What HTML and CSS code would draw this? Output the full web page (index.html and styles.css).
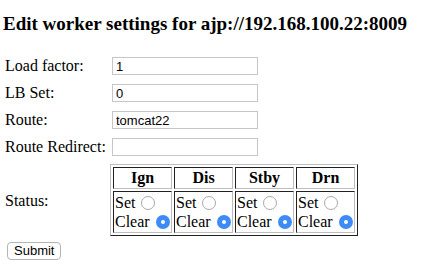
FILE: index.html
```html
<!DOCTYPE html>
<html lang="en">
<head>
    <meta charset="UTF-8">
    <title>Edit worker settings</title>
    <link rel="stylesheet" href="styles.css">
</head>
<body>
    <h3 class="title">Edit worker settings for ajp://192.168.100.22:8009</h3>
    <form class="settings">
        <div class="fields">
            <label class="label">Load factor:</label>
            <input class="field" type="text" value="1">
            <label class="label">LB Set:</label>
            <input class="field" type="text" value="0">
            <label class="label">Route:</label>
            <input class="field" type="text" value="tomcat22">
            <label class="label">Route Redirect:</label>
            <input class="field" type="text" value="">
            <label class="label">Status:</label>
            <table class="status">
                <tr>
                    <th>Ign</th>
                    <th>Dis</th>
                    <th>Stby</th>
                    <th>Drn</th>
                </tr>
                <tr>
                    <td>Set <input type="radio" name="ign"><br>Clear <input type="radio" name="ign" checked></td>
                    <td>Set <input type="radio" name="dis"><br>Clear <input type="radio" name="dis" checked></td>
                    <td>Set <input type="radio" name="stby"><br>Clear <input type="radio" name="stby" checked></td>
                    <td>Set <input type="radio" name="drn"><br>Clear <input type="radio" name="drn" checked></td>
                </tr>
            </table>
        </div>
        <button class="submit" type="button">Submit</button>
    </form>
</body>
</html>
```

FILE: styles.css
```css
body {
    margin: 0;
    font-family: "Liberation Serif", "Times New Roman", serif;
    font-size: 16px;
    color: #000;
    background: #fff;
}

.title {
    font-size: 19px;
    font-weight: bold;
    margin: 13px 0 0 3px;
}

.settings {
    margin-top: 22px;
    padding-left: 5px;
}

.fields {
    display: grid;
    grid-template-columns: 105px auto;
    row-gap: 9px;
    align-items: center;
}

.field {
    box-sizing: border-box;
    width: 146px;
    height: 18px;
    margin: 0 0 0 2px;
    padding: 0 3px;
    border: 1px solid #c6c6c6;
    font-family: "Liberation Sans", Arial, sans-serif;
    font-size: 13px;
    color: #000;
}

.status {
    justify-self: start;
    border-collapse: separate;
    border-spacing: 2px;
    border: 1px solid;
    border-color: #bdbdbd #222 #222 #bdbdbd;
    margin-top: -1px;
}

.status th,
.status td {
    width: 55px;
    padding: 1px;
    border: 1px solid;
    border-color: #222 #bdbdbd #bdbdbd #222;
}

.status th {
    text-align: center;
    font-weight: bold;
    line-height: 18px;
}

.status td {
    text-align: left;
    line-height: 19px;
    white-space: nowrap;
}

.status input[type="radio"] {
    -webkit-appearance: none;
    appearance: none;
    box-sizing: border-box;
    width: 14px;
    height: 14px;
    margin: 0 0 0 2px;
    border: 1px solid #a9a9a9;
    border-radius: 50%;
    background: #fff;
    vertical-align: -2px;
}

.status input[type="radio"]:checked {
    border: 5px solid #3c8bf6;
    background: #fff;
}

.submit {
    margin: 6px 0 0 2px;
    height: 18px;
    padding: 0 6px;
    border: 1px solid #b4b4b4;
    border-radius: 4px;
    background: #fff;
    font-family: "Liberation Sans", Arial, sans-serif;
    font-size: 13px;
    line-height: 16px;
    color: #000;
}
```
